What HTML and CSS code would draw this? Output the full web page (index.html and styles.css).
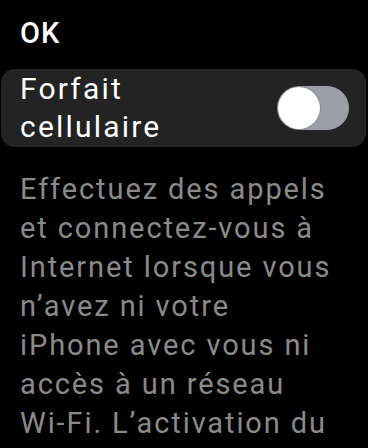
FILE: index.html
```html
<!DOCTYPE html>
<html lang="fr">
<head>
  <meta charset="UTF-8">
  <meta name="viewport" content="width=device-width, initial-scale=1.0">
  <title>Forfait cellulaire</title>
  <link rel="stylesheet" href="styles.css">
</head>
<body>
  <div class="screen">
    <!-- Top bar -->
    <div class="nav">
      <span class="ok">OK</span>
    </div>

    <!-- Cellular toggle -->
    <div class="cell">
      <span class="cell-label">Forfait cellulaire</span>
      <span class="toggle"><span class="knob"></span></span>
    </div>

    <p class="note">Effectuez des appels<br>et connectez-vous à<br>Internet lorsque vous<br>n’avez ni votre<br>iPhone avec vous ni<br>accès à un réseau<br>Wi-Fi. L’activation du<br>forfait cellulaire peut entraîner des frais supplémentaires.</p>
  </div>
</body>
</html>
```

FILE: styles.css
```css
/* Basic styles */
html, body {
    margin: 0;
    background: #000;
}
body {
    font-family: Roboto, "Liberation Sans", sans-serif;
    color: #fff;
    overflow: hidden;
}
.screen {
    padding: 0 2px 0 1px;
}

/* Top bar */
.nav {
    padding: 14px 19px 0;
    height: 55px;
    box-sizing: border-box;
}
.ok {
    font-size: 29px;
    font-weight: 500;
    line-height: 38px;
    letter-spacing: 1px;
}

/* Cell */
.cell {
    display: flex;
    align-items: center;
    justify-content: space-between;
    background: #232323;
    border-radius: 14px;
    padding: 1px 17px 1px 19px;
    margin-top: 14px;
}
.cell-label {
    font-size: 30px;
    line-height: 38px;
    letter-spacing: 2.2px;
    width: 200px;
}
.toggle {
    width: 72px;
    height: 44px;
    border-radius: 22px;
    background: #9c9fa8;
    display: flex;
    align-items: center;
    padding: 1px;
    box-sizing: border-box;
}
.knob {
    width: 42px;
    height: 42px;
    border-radius: 50%;
    background: #fff;
    box-shadow: 0 0 2px rgba(0, 0, 0, 0.4);
}

/* Footer text */
.note {
    margin: 23px 0 0 19px;
    width: 348px;
    font-size: 29px;
    line-height: 39px;
    letter-spacing: 1.9px;
    color: #8a8a8a;
}
```
